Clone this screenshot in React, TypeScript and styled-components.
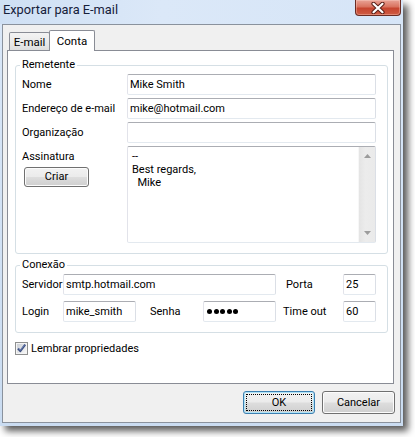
import React from "react";
import styled, { createGlobalStyle } from "styled-components";

const Global = createGlobalStyle`
  html, body { margin: 0; padding: 0; background: #ffffff; }
  body {
    font-family: Roboto, "Liberation Sans", sans-serif;
    font-size: 11px;
    color: #000;
  }
`;

const Page = styled.div`
  width: 415px;
  height: 437px;
  overflow: hidden;
  background: #fff;
`;

const Window = styled.div`
  width: 403px;
  height: 426px;
  display: flex;
  flex-direction: column;
  background: linear-gradient(180deg, #d3e3f6 0px, #d9e7f8 24px, #cadcf1 100%);
  box-shadow: 5px 5px 7px rgba(0, 0, 0, 0.65);
`;

const TitleBar = styled.div`
  height: 24px;
  flex: none;
  display: flex;
  align-items: flex-start;
  padding: 0 2px 0 3px;
  background: linear-gradient(90deg, #cfe0f4 0%, #dbe8f8 40%, #d6e5f7 100%);
`;

const TitleText = styled.span`
  padding-top: 3px;
  line-height: 14px;
  font-size: 12.8px;
  color: #16203a;
`;

const CloseButton = styled.div`
  margin-left: auto;
  width: 46px;
  height: 16px;
  box-sizing: border-box;
  border: 1px solid #6a2b22;
  border-top: none;
  border-radius: 0 0 4px 4px;
  background: linear-gradient(180deg, #e9a396 0%, #d9735f 45%, #c6452f 55%, #cf5c44 100%);
  box-shadow: inset 0 0 0 1px rgba(255, 220, 210, 0.35);
  display: flex;
  align-items: center;
  justify-content: center;
`;

const Client = styled.div`
  flex: 1;
  margin: 0 2px 3px 2px;
  border: 1px solid #8a929d;
  background: #f0f0f0;
  display: flex;
  flex-direction: column;
  padding: 5px 5px 8px 4px;
`;

const TabControl = styled.div`
  margin-right: 1px;
  display: flex;
  flex-direction: column;
`;

const TabStrip = styled.div`
  display: flex;
  align-items: flex-end;
  padding-left: 2px;
  height: 20px;
`;

const Tab = styled.div<{ $active?: boolean; $w: number }>`
  position: relative;
  box-sizing: border-box;
  width: ${(p) => p.$w}px;
  height: ${(p) => (p.$active ? 21 : 18)}px;
  margin-bottom: ${(p) => (p.$active ? -1 : 0)}px;
  margin-left: ${(p) => (p.$active ? -1 : 0)}px;
  z-index: ${(p) => (p.$active ? 2 : 1)};
  border: 1px solid #898c95;
  border-bottom: none;
  border-radius: 2px 2px 0 0;
  background: ${(p) =>
    p.$active ? "#ffffff" : "linear-gradient(180deg, #f3f3f3 0%, #ebebeb 50%, #dedede 100%)"};
  display: flex;
  align-items: center;
  justify-content: center;
  line-height: 14px;
  font-size: 11.5px;
  padding-top: ${(p) => (p.$active ? 0 : 1)}px;
`;

const Panel = styled.div`
  height: 334px;
  box-sizing: border-box;
  border: 1px solid #898c95;
  background: #ffffff;
  padding: 7px 5px 0 7px;
  display: flex;
  flex-direction: column;
`;

const Group = styled.fieldset<{ $gap?: number }>`
  margin: ${(p) => p.$gap ?? 0}px 0 0 0;
  min-width: 0;
  border: 1px solid #d5dfe5;
  border-radius: 3px;
  padding: 2px 11px 10px 6px;
`;

const Legend = styled.legend`
  padding: 0 2px;
  margin-left: -2px;
  line-height: 14px;
  color: #000;
`;

const SenderGrid = styled.div`
  display: grid;
  grid-template-columns: 105px 1fr;
  row-gap: 3px;
  align-items: center;
`;

const ConnGrid = styled.div`
  display: grid;
  grid-template-columns: 41px 73px 67px 73px 67px 33px;
  row-gap: 6px;
  align-items: center;
`;

const Label = styled.span<{ $indent?: number }>`
  padding-left: ${(p) => p.$indent ?? 0}px;
  white-space: nowrap;
  line-height: 14px;
`;

const LabelStack = styled.div`
  align-self: start;
  display: flex;
  flex-direction: column;
  align-items: flex-start;
  padding-top: 4px;
  gap: 3px;
`;

const Field = styled.div<{ $span?: number; $pad?: number }>`
  grid-column: ${(p) => (p.$span ? `span ${p.$span}` : "auto")};
  height: 21px;
  box-sizing: border-box;
  border: 1px solid;
  border-color: #abadb3 #dbdfe6 #e3e9ef #e2e3ea;
  border-radius: 2px;
  background: #fff;
  padding: 0 2px 0 ${(p) => p.$pad ?? 2}px;
  display: flex;
  align-items: center;
  white-space: nowrap;
  overflow: hidden;
`;

const Dots = styled.div`
  display: flex;
  gap: 1.6px;
`;

const Dot = styled.span`
  width: 5px;
  height: 5px;
  border-radius: 50%;
  background: #000;
`;

const Memo = styled.div`
  height: 97px;
  box-sizing: border-box;
  border: 1px solid;
  border-color: #abadb3 #dbdfe6 #e3e9ef #e2e3ea;
  border-radius: 2px;
  background: #fff;
  display: flex;
`;

const MemoText = styled.div`
  flex: 1;
  padding: 3px 4px;
  white-space: pre;
  line-height: 13px;
`;

const ScrollBar = styled.div`
  width: 17px;
  flex: none;
  background: linear-gradient(90deg, #e4e4e4 0%, #ececec 40%, #eaeaea 100%);
  border-left: 1px solid #f7f7f7;
  box-sizing: border-box;
  display: flex;
  flex-direction: column;
  justify-content: space-between;
`;

const ScrollArrow = styled.div`
  height: 18px;
  display: flex;
  align-items: center;
  justify-content: center;
`;

const WinButton = styled.div<{ $w: number; $h: number; $default?: boolean }>`
  position: relative;
  width: ${(p) => p.$w}px;
  height: ${(p) => p.$h}px;
  box-sizing: border-box;
  border: 1px solid ${(p) => (p.$default ? "#3c7fb1" : "#707070")};
  border-radius: 3px;
  background: linear-gradient(180deg, #f2f2f2 0%, #ebebeb 48%, #dddddd 52%, #cfcfcf 100%);
  box-shadow: inset 0 0 0 1px ${(p) => (p.$default ? "#aee3f7" : "#fcfcfc")};
  display: flex;
  align-items: center;
  justify-content: center;
  line-height: 14px;
  flex: none;
  &::after {
    content: "";
    display: ${(p) => (p.$default ? "block" : "none")};
    position: absolute;
    inset: 2px;
    border: 1px dotted #000;
  }
`;

const CreateButton = styled(WinButton)`
  margin-left: 2px;
`;

const CheckRow = styled.div`
  margin-top: 8px;
  height: 15px;
  display: flex;
  align-items: center;
  gap: 3px;
`;

const ButtonRow = styled.div`
  margin-top: 7px;
  display: flex;
  justify-content: flex-end;
  gap: 7px;
`;

const CloseGlyph = () => (
  <svg width="14" height="12" viewBox="0 0 14 12">
    <path d="M2.5 1.8 L11.5 10.2 M11.5 1.8 L2.5 10.2" stroke="#5a2018" strokeWidth="4.2" strokeLinecap="round" />
    <path d="M2.5 1.8 L11.5 10.2 M11.5 1.8 L2.5 10.2" stroke="#ffffff" strokeWidth="2.2" strokeLinecap="round" />
  </svg>
);

const Arrow = ({ up }: { up?: boolean }) => (
  <svg width="7" height="4" viewBox="0 0 7 4">
    <polygon points={up ? "0,4 7,4 3.5,0" : "0,0 7,0 3.5,4"} fill="#9c9c9c" />
  </svg>
);

const CheckBox = () => (
  <svg width="13" height="13" viewBox="0 0 13 13">
    <defs>
      <linearGradient id="cbg" x1="0" y1="0" x2="1" y2="1">
        <stop offset="0" stopColor="#cbcfd5" />
        <stop offset="1" stopColor="#f7f7f7" />
      </linearGradient>
    </defs>
    <rect x="0.5" y="0.5" width="12" height="12" fill="#f4f4f4" stroke="#8e8f8f" />
    <rect x="2" y="2" width="9" height="9" fill="url(#cbg)" />
    <path d="M3 6.5 L5.3 9.2 L10.2 2.6" fill="none" stroke="#3d4f80" strokeWidth="2" strokeLinejoin="round" />
    <path d="M3.6 6.4 L5.3 8.3 L9.6 2.8" fill="none" stroke="#7d93c9" strokeWidth="0.7" />
  </svg>
);

export default function App() {
  return (
    <Page>
      <Global />
      <Window>
        <TitleBar>
          <TitleText>Exportar para E-mail</TitleText>
          <CloseButton>
            <CloseGlyph />
          </CloseButton>
        </TitleBar>
        <Client>
          <TabControl>
            <TabStrip>
              <Tab $w={41}>E-mail</Tab>
              <Tab $w={46} $active>
                Conta
              </Tab>
            </TabStrip>
            <Panel>
              <Group>
                <Legend>Remetente</Legend>
                <SenderGrid>
                  <Label>Nome</Label>
                  <Field>Mike Smith</Field>
                  <Label>Endereço de e-mail</Label>
                  <Field>mike@hotmail.com</Field>
                  <Label>Organização</Label>
                  <Field />
                  <LabelStack>
                    <Label>Assinatura</Label>
                    <CreateButton $w={65} $h={20}>
                      Criar
                    </CreateButton>
                  </LabelStack>
                  <Memo>
                    <MemoText>{"--\nBest regards,\n  Mike"}</MemoText>
                    <ScrollBar>
                      <ScrollArrow>
                        <Arrow up />
                      </ScrollArrow>
                      <ScrollArrow>
                        <Arrow />
                      </ScrollArrow>
                    </ScrollBar>
                  </Memo>
                </SenderGrid>
              </Group>
              <Group $gap={4}>
                <Legend>Conexão</Legend>
                <ConnGrid>
                  <Label>Servidor</Label>
                  <Field $span={3}>smtp.hotmail.com</Field>
                  <Label $indent={10}>Porta</Label>
                  <Field>25</Field>
                  <Label>Login</Label>
                  <Field>mike_smith</Field>
                  <Label $indent={14}>Senha</Label>
                  <Field $pad={3}>
                    <Dots>
                      <Dot />
                      <Dot />
                      <Dot />
                      <Dot />
                      <Dot />
                    </Dots>
                  </Field>
                  <Label $indent={7}>Time out</Label>
                  <Field>60</Field>
                </ConnGrid>
              </Group>
              <CheckRow>
                <CheckBox />
                <Label>Lembrar propriedades</Label>
              </CheckRow>
            </Panel>
          </TabControl>
          <ButtonRow>
            <WinButton $w={72} $h={23} $default>
              OK
            </WinButton>
            <WinButton $w={73} $h={23}>
              Cancelar
            </WinButton>
          </ButtonRow>
        </Client>
      </Window>
    </Page>
  );
}
